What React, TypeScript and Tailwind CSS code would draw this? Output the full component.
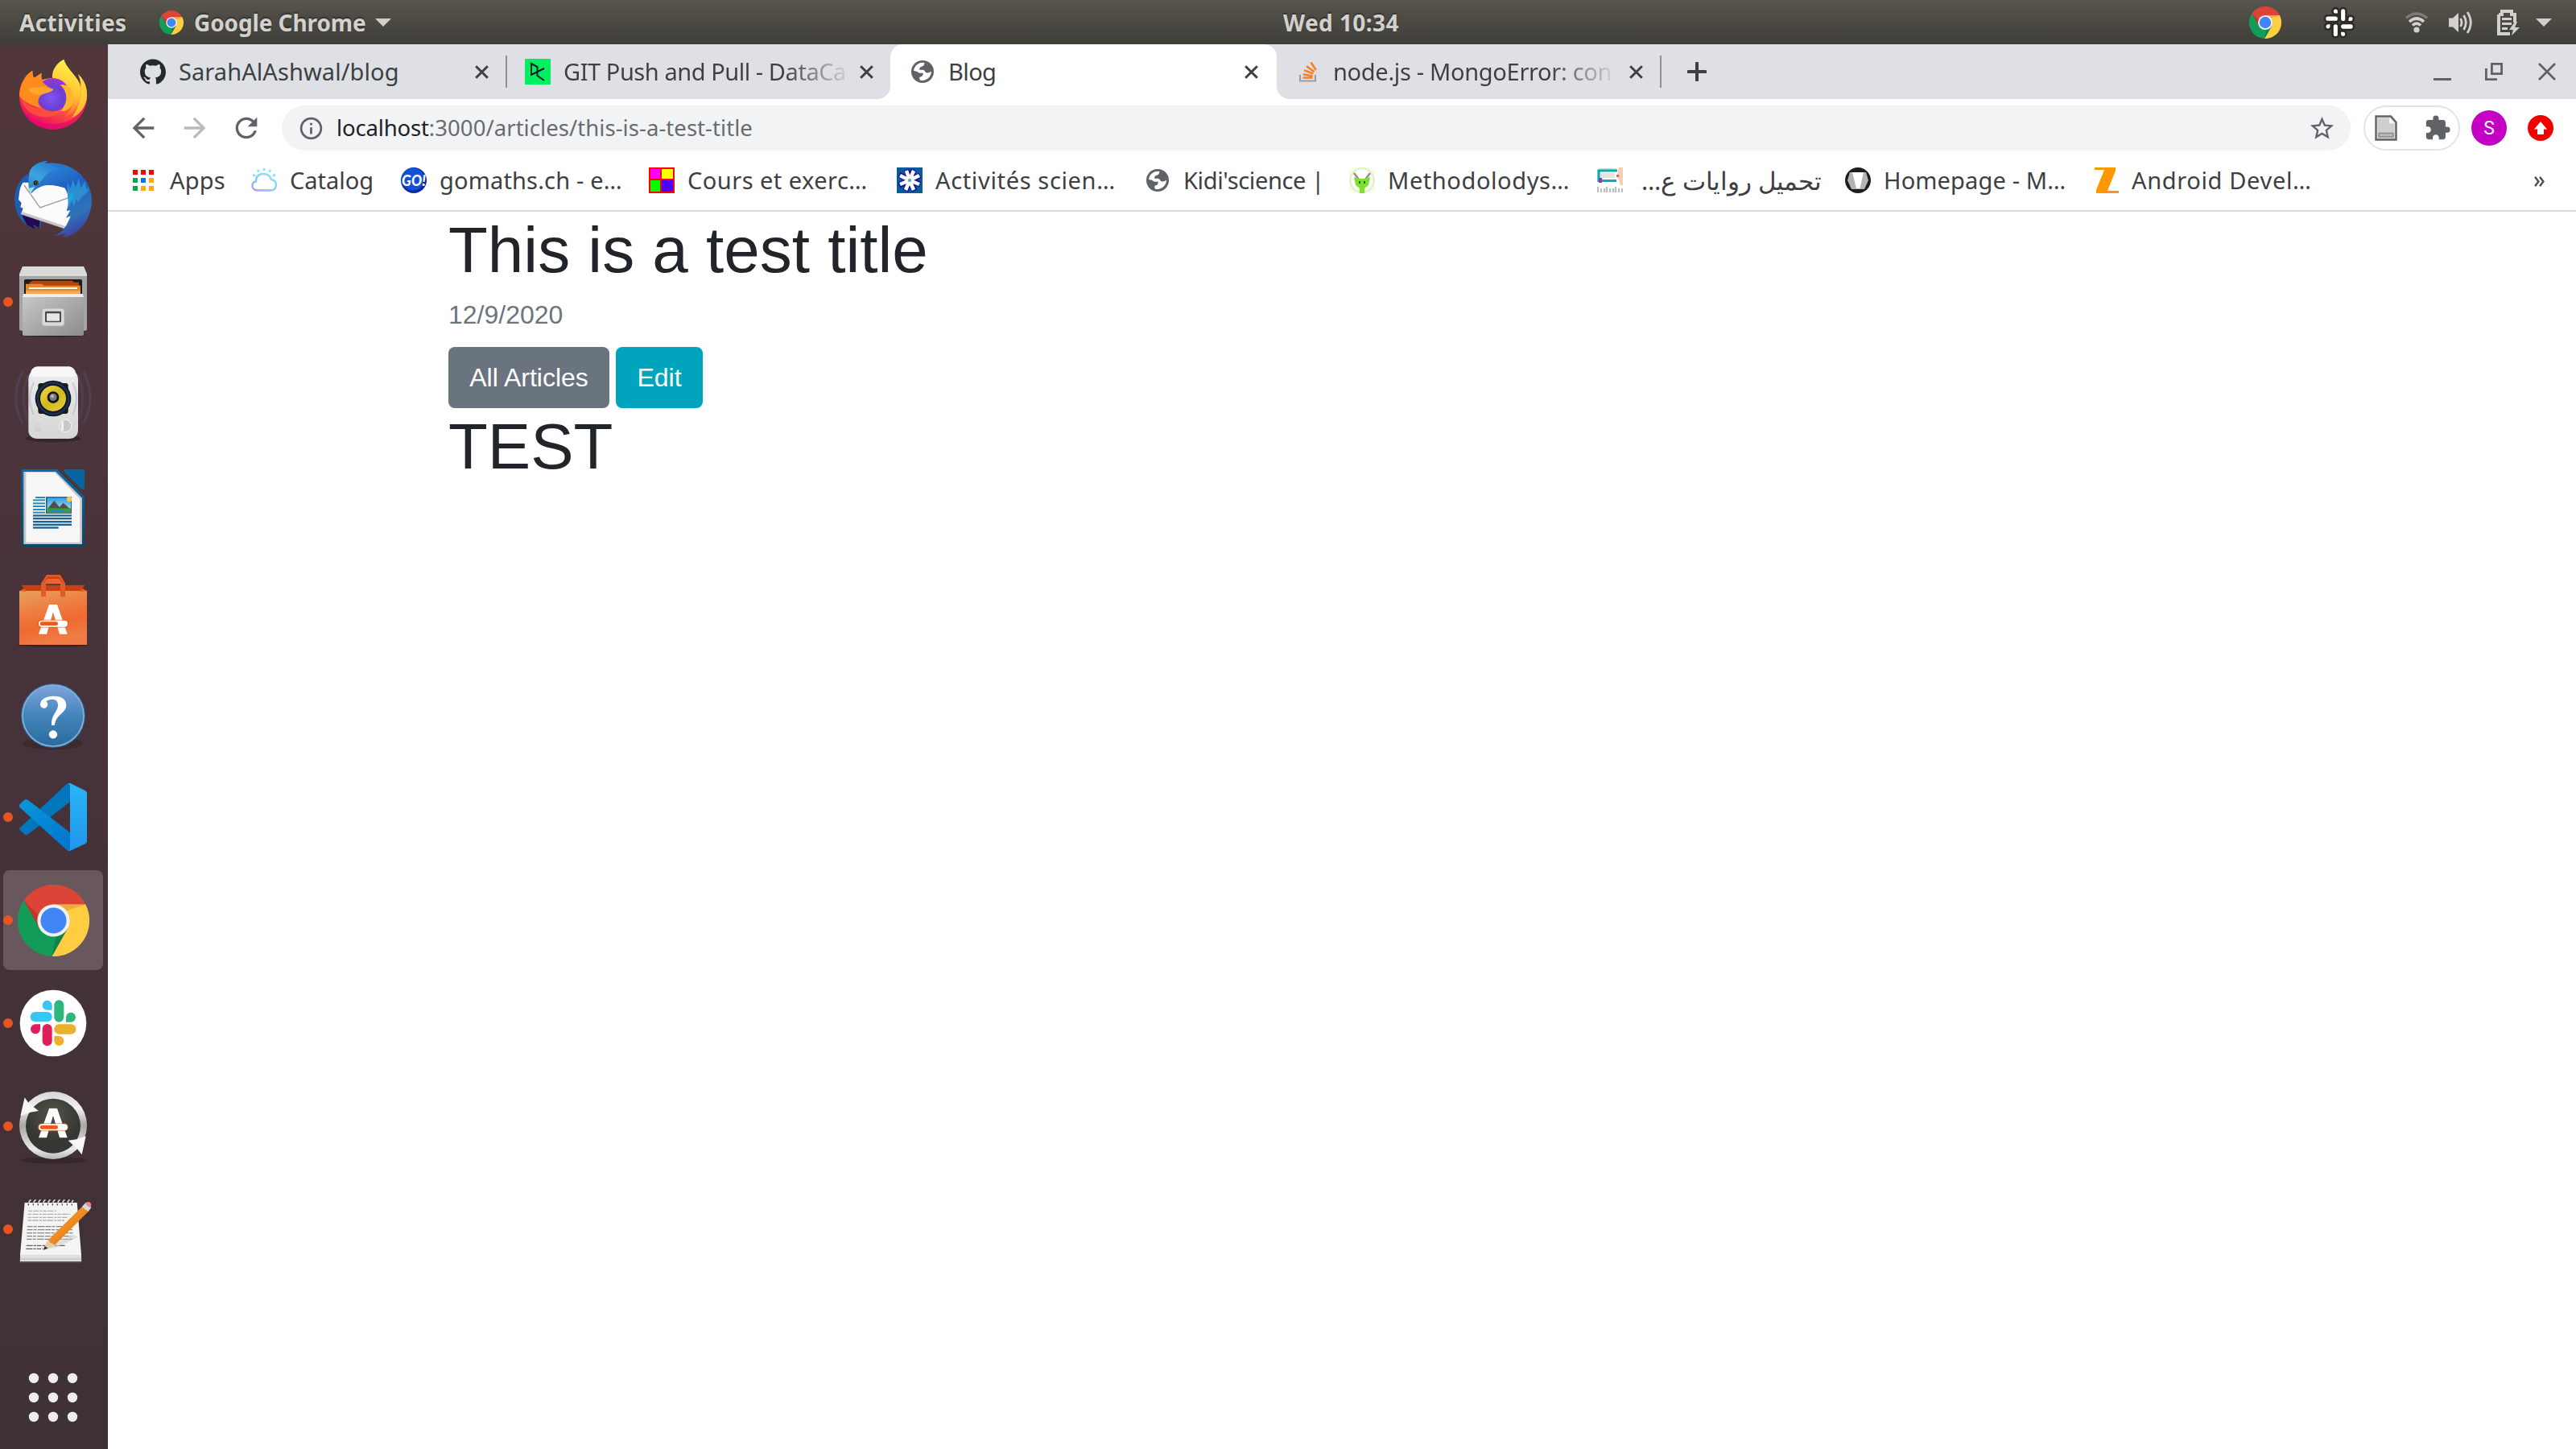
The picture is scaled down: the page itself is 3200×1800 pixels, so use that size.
import type { ReactNode } from 'react';
import { SiGithub } from 'react-icons/si';
import {
  MdArrowBack,
  MdArrowForward,
  MdExtension,
  MdInfoOutline,
  MdRefresh,
  MdStarBorder,
} from 'react-icons/md';

/* ---------- shared drawings ---------- */

function ChromeMark({ className }: { className: string }) {
  return (
    <svg viewBox="-133 -133 266 266" className={className}>
      <path d="M-110-75A133 133 0 0 1 119-60L0-60L0 0L-52 30Z" fill="#dc4437" />
      <path d="M-110-75L-52 30L0 0L52 30L-6 133A133 133 0 0 1-110-75Z" fill="#119d58" />
      <path d="M119-60A133 133 0 0 1-6 133L52 30L0 0L0-60Z" fill="#ffcd41" />
      <path d="M119-60L0-60L48-36Z" fill="#e2a637" opacity="0.75" />
      <path d="M-6 133L52 30L10 58Z" fill="#0b7c45" opacity="0.75" />
      <path d="M-110-75L-52 30L-56-20Z" fill="#b03429" opacity="0.75" />
      <circle r="60" fill="#f1f1f1" />
      <circle r="48" fill="#4285f4" />
    </svg>
  );
}

function Globe({ className }: { className: string }) {
  return (
    <svg viewBox="36 31 84 84" className={className}>
      <circle cx="78" cy="73" r="42" fill="#5f6368" />
      <path
        d="M45 70A34 34 0 0 1 85 40Q85 52 75 54Q66 56 66 66H78Q87 67 88 74Q94 82 111 72A34 34 0 0 1 69 105L66 98Q66 94 72 92Q80 90 80 83V78H66Q58 70 45 70Z"
        fill="#fff"
      />
    </svg>
  );
}

function SlackPieces() {
  return (
    <>
      <g fill="#38c6f3">
        <rect x="113" y="171" width="81" height="37" rx="18" />
        <path d="M194 164V146A18 18 0 1 0 176 164Z" />
      </g>
      <g fill="#2fb67d">
        <rect x="202" y="127" width="36" height="82" rx="18" />
        <path d="M246 209V190A18 18 0 1 1 264 209Z" />
      </g>
      <g fill="#ebb12e">
        <rect x="202" y="217" width="81" height="37" rx="18" />
        <path d="M202 261H220A18 18 0 1 1 202 279Z" />
      </g>
      <g fill="#e01f5a">
        <rect x="158" y="216" width="36" height="82" rx="18" />
        <path d="M150 217V236A18 18 0 1 1 132 217Z" />
      </g>
    </>
  );
}

function AppLetter({ y }: { y: number }) {
  return (
    <g transform={`translate(0 ${y})`}>
      <path d="M183 0H213L251 110H222L198 28L174 110H144Z" fill="#fff" />
      <rect x="140" y="56" width="115" height="30" rx="15" fill="#d9541f" opacity="0.6" />
      <rect x="144" y="59" width="108" height="24" rx="12" fill="#fff" />
      <rect x="149" y="64" width="67" height="14" rx="7" fill="#ee5a17" />
    </g>
  );
}

/* ---------- dock ---------- */

function Cell({
  box,
  running,
  children,
}: {
  box: string;
  running?: boolean;
  children: ReactNode;
}) {
  return (
    <div className="relative h-[128px] w-[134px] shrink-0">
      {running && <div className="absolute top-[58px] left-1 h-[12px] w-[11.5px] rounded-full bg-[#e95420]" />}
      <svg viewBox={box} className="relative block h-[128px] w-[134px]">
        {children}
      </svg>
    </div>
  );
}

function Dock() {
  return (
    <aside className="flex w-[134px] shrink-0 flex-col bg-linear-to-b from-[#51373a] via-[#46323a] to-[#3e3134]">
      <Cell box="0 15 402 384">
        <defs>
          <linearGradient id="ffBody" x1="0.8" y1="0" x2="0.25" y2="1">
            <stop offset="0" stopColor="#fff44f" />
            <stop offset="0.35" stopColor="#ffa02c" />
            <stop offset="0.65" stopColor="#ff4a3e" />
            <stop offset="1" stopColor="#e5006e" />
          </linearGradient>
          <linearGradient id="ffFlame" x1="0.6" y1="0" x2="0.4" y2="1">
            <stop offset="0" stopColor="#fff14d" />
            <stop offset="0.55" stopColor="#ffc631" />
            <stop offset="1" stopColor="#ff5a38" />
          </linearGradient>
          <radialGradient id="ffGlobe" cx="0.45" cy="0.6" r="0.65">
            <stop offset="0" stopColor="#8055f5" />
            <stop offset="0.55" stopColor="#6b3fd0" />
            <stop offset="1" stopColor="#a833d8" />
          </radialGradient>
        </defs>
        <path
          d="M121 113C121 126 122 135 128 140C137 133 146 126 156 122C153 133 154 141 158 147C172 143 186 141 197 142C194 110 212 84 238 72C243 92 262 112 284 140C297 156 301 168 302 176C303 158 298 142 291 127C314 146 325 176 324 208C323 280 268 332 198 332C128 332 72 276 72 206C72 166 92 130 121 113Z"
          fill="url(#ffBody)"
        />
        <path d="M74 226C84 276 130 312 196 312C262 312 314 272 323 218C320 282 264 332 198 332C134 332 80 288 74 226Z" fill="#e3086f" opacity="0.75" />
        <path d="M238 72C243 92 262 112 284 140C308 176 304 232 270 268C262 276 252 282 240 286C278 252 282 202 252 172C232 154 200 166 195 142C192 112 212 84 238 72Z" fill="url(#ffFlame)" />
        <path d="M291 127C316 150 330 186 322 222C314 258 290 280 268 288C300 246 312 176 291 127Z" fill="#ffd83a" opacity="0.75" />
        <circle cx="197" cy="203" r="62" fill="url(#ffGlobe)" />
        <path d="M224 166C262 162 282 196 272 230C266 254 246 266 224 264C252 240 258 196 224 166Z" fill="#ffb62e" />
        <path d="M72 206C74 166 92 130 121 113C121 126 122 135 128 140C152 142 168 172 198 182C198 192 170 194 154 204C138 218 138 240 156 254C110 240 84 226 72 206Z" fill="#ff8a1e" />
        <path d="M106 182C118 174 146 180 158 172C172 178 186 180 198 182C198 192 174 194 158 201C138 206 112 200 106 182Z" fill="#ffa62b" />
        <path d="M80 216C100 244 128 256 156 254C180 270 214 268 236 252C220 286 160 296 124 276C100 264 86 244 80 216Z" fill="#ff5b33" opacity="0.7" />
      </Cell>

      <Cell box="0 399 402 384">
        <defs>
          <linearGradient id="tbBody" x1="0.3" y1="0" x2="0.7" y2="1">
            <stop offset="0" stopColor="#2f8ede" />
            <stop offset="0.4" stopColor="#1f5fbf" />
            <stop offset="0.75" stopColor="#2f73b8" />
            <stop offset="1" stopColor="#3f3ea5" />
          </linearGradient>
          <linearGradient id="tbHead" x1="0.8" y1="0" x2="0.2" y2="1">
            <stop offset="0" stopColor="#1f6cc9" />
            <stop offset="0.6" stopColor="#3ea4e0" />
            <stop offset="1" stopColor="#2a80cf" />
          </linearGradient>
        </defs>
        <path d="M104 497C70 520 52 560 54 600C57 656 90 690 130 706L120 690L150 700L160 620L110 520Z" fill="#1f5cae" />
        <path d="M78 645L100 688L130 705L124 688L146 698L150 660Z" fill="#25084f" />
        <path d="M86 530C70 550 72 580 69 594L80 606L76 622L86 626L78 648L240 702C252 690 262 668 264 650L270 560L220 540L150 530Z" fill="#fbfbfb" />
        <path d="M78 650L240 702L246 694L84 640Z" fill="#a9a5a5" opacity="0.6" />
        <path d="M90 540L149 624L256 587" fill="none" stroke="#9b9b9b" strokeWidth="4" />
        <path d="M170 540C200 530 220 510 246 516L252 552C226 546 200 536 170 540Z" fill="#2b1673" />
        <path
          d="M108 500C110 472 140 452 178 449L164 462C250 444 330 500 341 580C348 660 300 726 232 734L246 720L202 730C226 716 240 706 252 680L264 655L246 662L262 634L248 636L256 606C256 576 246 556 240 550C206 538 176 536 152 546C136 552 124 562 118 570L108 562Z"
          fill="url(#tbBody)"
        />
        <path d="M108 500C112 472 140 452 178 449L164 460C200 452 232 462 252 474C216 478 178 486 162 512C152 530 136 540 122 560L112 572C104 548 106 522 108 500Z" fill="url(#tbHead)" />
        <path d="M250 530L262 552L272 520L282 550L294 512L302 552L316 524L322 556L330 548C330 582 300 570 294 606L284 592L276 622L268 600L254 630Z" fill="#2f9bd6" opacity="0.75" />
        <path d="M252 560L264 574L276 560L272 590L256 606Z" fill="#12b5e0" opacity="0.6" />
        <path d="M106 552L130 546L112 574Z" fill="#a9dbe0" />
        <circle cx="134" cy="532" r="9" fill="#151515" />
        <circle cx="136" cy="532" r="5" fill="none" stroke="#c98a1c" strokeWidth="2" />
      </Cell>

      <Cell box="0 783 402 384" running>
        <defs>
          <linearGradient id="metal" x1="0" y1="0" x2="1" y2="1">
            <stop offset="0" stopColor="#c9c9c9" />
            <stop offset="1" stopColor="#8c8c8c" />
          </linearGradient>
        </defs>
        <ellipse cx="198" cy="1098" rx="122" ry="8" fill="#2a1c1f" opacity="0.7" />
        <path d="M84 843H312L324 872V1076Q324 1082 318 1082H78Q72 1082 72 1076V872Z" fill="#a5a5a5" />
        <path d="M84 843H312L324 872H72Z" fill="#dadada" />
        <path d="M72 872H324V878H72Z" fill="#e4e4e4" />
        <rect x="90" y="891" width="216" height="60" rx="5" fill="#1d1d1d" />
        <path d="M110 903L120 896H270L276 902H294V950H110Z" fill="#b8430f" />
        <path d="M96 908H156L164 914H300V950H96Z" fill="#e9862c" />
        <path d="M108 921H288V927H108Z" fill="#fff" />
        <path d="M96 934H300V950H96Z" fill="#f0a859" />
        <path d="M90 945H306L312 955V1096Q312 1101 307 1101H89Q84 1101 84 1096V955Z" fill="url(#metal)" />
        <path d="M88 945H308L312 957H84Z" fill="#ededed" />
        <rect x="156" y="999" width="84" height="66" rx="10" fill="#dadada" stroke="#b0b0b0" strokeWidth="3" />
        <rect x="168" y="1010" width="60" height="41" rx="4" fill="#484c4b" />
        <rect x="174" y="1018" width="48" height="28" rx="2" fill="#e6e6e6" />
      </Cell>

      <Cell box="0 27 402 384">
        <defs>
          <linearGradient id="spk" x1="0" y1="0" x2="0" y2="1">
            <stop offset="0" stopColor="#fafafa" />
            <stop offset="0.15" stopColor="#e9e9e9" />
            <stop offset="1" stopColor="#d6d6d4" />
          </linearGradient>
          <linearGradient id="cone" x1="0" y1="0" x2="1" y2="1">
            <stop offset="0" stopColor="#f0da45" />
            <stop offset="0.5" stopColor="#d0b820" />
            <stop offset="1" stopColor="#e8d23c" />
          </linearGradient>
        </defs>
        <ellipse cx="198" cy="344" rx="104" ry="14" fill="#2a1c1f" opacity="0.6" />
        <g fill="none" stroke="#50507e" opacity="0.4">
          <path d="M84 94Q34 194 84 290" strokeWidth="9" />
          <path d="M311 94Q361 194 311 290" strokeWidth="9" />
          <path d="M104 110Q72 194 104 275" strokeWidth="8" />
          <path d="M292 110Q324 194 292 275" strokeWidth="8" />
        </g>
        <path d="M138 76H258Q276 78 282 98Q292 110 291 130V312Q290 344 256 345H140Q106 344 106 312V130Q105 110 114 98Q120 78 138 76Z" fill="url(#spk)" />
        <path d="M140 78H256Q272 80 280 104Q282 114 266 114H130Q114 114 118 102Q124 80 140 78Z" fill="#f7f7f7" />
        <rect x="142" y="138" width="112" height="114" rx="10" fill="#1c1c1c" />
        <circle cx="198" cy="195" r="67" fill="#131820" />
        <circle cx="198" cy="195" r="58" fill="none" stroke="#1f3152" strokeWidth="8" />
        <circle cx="198" cy="195" r="48" fill="url(#cone)" />
        <circle cx="198" cy="191" r="22" fill="#141414" />
        <circle cx="198" cy="190" r="14" fill="#7b7b7b" />
        <circle cx="195" cy="187" r="6" fill="#b9b9b9" />
        <path d="M126 136Q96 194 126 256M270 136Q300 194 270 256" fill="none" stroke="#8fa2d2" strokeWidth="6" opacity="0.4" />
        <circle cx="243" cy="297" r="23" fill="#c9c9c7" stroke="#f4f4f4" strokeWidth="3" />
        <path d="M232 280V314" stroke="#f0f0f0" strokeWidth="10" />
        <rect x="131" y="290" width="20" height="28" rx="3" fill="none" stroke="#cfcfcd" strokeWidth="3" />
        <circle cx="141" cy="309" r="5" fill="none" stroke="#c4c4c2" strokeWidth="3" />
      </Cell>

      <Cell box="0 411 402 384">
        <defs>
          <linearGradient id="wr" x1="0" y1="0" x2="0" y2="1">
            <stop offset="0" stopColor="#0b6aa8" />
            <stop offset="1" stopColor="#0a4668" />
          </linearGradient>
          <linearGradient id="wrSky" x1="0" y1="0" x2="0" y2="1">
            <stop offset="0" stopColor="#3aa0e0" />
            <stop offset="1" stopColor="#b5e2f6" />
          </linearGradient>
        </defs>
        <path d="M87 459H212L315 562V740Q315 747 308 747H87Q80 747 80 740V466Q80 459 87 459Z" fill="url(#wr)" />
        <path d="M244 459H308Q315 459 315 466V528Q314 537 304 533L240 470Q236 460 244 459Z" fill="#07659f" />
        <path d="M88 468H208L306 566V738H88Z" fill="#c6c6c6" />
        <path d="M90 470H204L298 570V731H97V470Z" fill="#f6f6f6" />
        <g fill="#2b8bb8">
          <rect x="132" y="561" width="36" height="6" />
          <rect x="123" y="571" width="45" height="6" />
          <rect x="123" y="583" width="45" height="6" />
          <rect x="123" y="594" width="45" height="6" />
          <rect x="123" y="606" width="45" height="6" />
          <rect x="123" y="617" width="45" height="6" />
        </g>
        <g fill="#1f6391">
          <rect x="123" y="628" width="144" height="7" />
          <rect x="123" y="639" width="144" height="7" />
          <rect x="123" y="651" width="144" height="7" />
          <rect x="123" y="662" width="144" height="7" />
          <rect x="123" y="673" width="95" height="7" />
        </g>
        <rect x="171" y="561" width="96" height="63" fill="#14679b" />
        <rect x="176" y="565" width="88" height="54" fill="url(#wrSky)" />
        <circle cx="258" cy="570" r="10" fill="#f5c944" />
        <path d="M177 606L202 576L222 600L236 584L260 606Z" fill="#4f4f4f" />
        <path d="M176 604H264V619H176Z" fill="#3f9b35" />
        <path d="M186 611H240V617H186Z" fill="#1a8fb0" />
      </Cell>

      <Cell box="0 795 402 384">
        <defs>
          <linearGradient id="bag" x1="0" y1="0" x2="0.3" y2="1">
            <stop offset="0" stopColor="#e8a05c" />
            <stop offset="0.45" stopColor="#ee7a3f" />
            <stop offset="0.7" stopColor="#ef6a2e" />
            <stop offset="1" stopColor="#f07c45" />
          </linearGradient>
        </defs>
        <ellipse cx="198" cy="1113" rx="132" ry="8" fill="#2a1c1f" opacity="0.7" />
        <path d="M80 891H316L308 900L324 914H72L88 902Z" fill="#c9410f" />
        <path d="M72 912H324V1113H72Z" fill="url(#bag)" />
        <path d="M72 912L94 904V916ZM324 912L302 904V916Z" fill="#e8602a" />
        <path d="M171 866H225L238 884H158Z" fill="#8e2c0b" />
        <path d="M153 934V884L174 852H224L243 884V934H225V886H171V934Z" fill="#e35a26" />
        <path d="M178 860H220L236 884H160Z" fill="#c44312" />
        <path d="M176 866H220L234 886H162Z" fill="#ea6532" />
        <AppLetter y={963} />
      </Cell>

      <Cell box="0 9 402 384">
        <defs>
          <linearGradient id="help" x1="0" y1="0" x2="0" y2="1">
            <stop offset="0" stopColor="#7fa3dd" />
            <stop offset="0.5" stopColor="#4385bb" />
            <stop offset="1" stopColor="#2a6a9e" />
          </linearGradient>
        </defs>
        <ellipse cx="198" cy="310" rx="112" ry="24" fill="#2a1c1f" opacity="0.35" />
        <circle cx="198" cy="207" r="120" fill="#2e6a9c" />
        <circle cx="198" cy="207" r="114" fill="url(#help)" stroke="#86b2da" strokeWidth="5" />
        <path
          d="M150 167C150 146 170 134 200 134C230 134 247 146 247 168C247 198 207 204 204 242L193 244C188 206 216 192 216 168C216 152 208 146 194 146C186 146 177 149 172 154A14 14 0 1 1 150 167Z"
          fill="#fff"
        />
        <circle cx="198" cy="277" r="15.500" fill="#fff" />
      </Cell>

      <Cell box="0 393 402 384" running>
        <defs>
          <linearGradient id="vsR" x1="0" y1="0" x2="0" y2="1">
            <stop offset="0" stopColor="#2bb4f6" />
            <stop offset="1" stopColor="#1f97ee" />
          </linearGradient>
          <linearGradient id="vsF" x1="0" y1="0" x2="1" y2="1">
            <stop offset="0" stopColor="#0a97dd" />
            <stop offset="1" stopColor="#0074cc" />
          </linearGradient>
        </defs>
        <path d="M73 626L248 462Q254 458 261 460V528L105 649Q97 654 90 648L75 634Q70 630 73 626Z" fill="#0276bb" />
        <path d="M75 536L90 522Q97 516 105 522L261 643V711Q254 713 248 707L73 548Q70 541 75 536Z" fill="url(#vsF)" />
        <path d="M254 459L262 459L317 486Q324 490 324 496V675Q324 681 317 685L262 710Q258 712 254 711Q261 708 261 700V470Q261 462 254 459Z" fill="url(#vsR)" />
      </Cell>

      <div className="relative flex h-[128px] w-[134px] shrink-0 items-center">
        <div className="absolute top-0.5 left-1 h-[124px] w-[124px] rounded-lg bg-[#68575c]" />
        <div className="absolute top-[58px] left-1 h-[12px] w-[11.5px] rounded-full bg-[#e95420]" />
        <ChromeMark className="relative ml-[21.5px] size-[89px]" />
      </div>

      <Cell box="0 21 402 384" running>
        <circle cx="198" cy="213" r="124" fill="#fff" />
        <SlackPieces />
      </Cell>

      <Cell box="0 405 402 384" running>
        <defs>
          <linearGradient id="ring" x1="0" y1="0" x2="0" y2="1">
            <stop offset="0" stopColor="#d6d6d6" />
            <stop offset="0.25" stopColor="#f2f2f2" />
            <stop offset="0.5" stopColor="#aaa6a4" />
            <stop offset="0.85" stopColor="#e9e9e9" />
            <stop offset="1" stopColor="#b5b5b5" />
          </linearGradient>
          <radialGradient id="disc" cy="0.3">
            <stop offset="0" stopColor="#55554f" />
            <stop offset="1" stopColor="#363632" />
          </radialGradient>
        </defs>
        <ellipse cx="198" cy="724" rx="122" ry="12" fill="#2a1c1f" opacity="0.5" />
        <circle cx="198" cy="594" r="126" fill="url(#ring)" />
        <circle cx="198" cy="596" r="102" fill="url(#disc)" />
        <path d="M183 530H213L251 640H222L198 558L174 640H144Z" fill="#fff" stroke="#33332f" strokeWidth="4" />
        <AppLetter y={530} />
        <path d="M92 490L106 510L144 540L110 546L76 559Z" fill="#f6f6f6" />
        <path d="M254 650L286 646L320 634L305 703L290 684Z" fill="#f6f6f6" />
      </Cell>

      <Cell box="0 789 402 384" running>
        <defs>
          <linearGradient id="pencil" x1="0" y1="0" x2="1" y2="1">
            <stop offset="0" stopColor="#fbb04a" />
            <stop offset="0.5" stopColor="#ef8b22" />
            <stop offset="1" stopColor="#c5660d" />
          </linearGradient>
        </defs>
        <path d="M73 1090H305V1106H73Z" fill="#4c5652" />
        <path d="M92 882H287L303 1076V1100H75V1076Z" fill="#f4f4f2" />
        <path d="M75 1076H303V1100H75Z" fill="#dededc" />
        <path d="M75 1090H303V1094H75Z" fill="#c6c6c4" />
        <g stroke="#b0b0ae" strokeWidth="4" strokeDasharray="14 3 22 4 9 3">
          <path d="M106 913H210M104 925H262M104 937H250M104 948H240" />
        </g>
        <g stroke="#868684" strokeWidth="4" strokeDasharray="20 3 12 4 26 3">
          <path d="M102 971H240M101 983H270M100 995H272M100 1007H262M99 1018H270" />
        </g>
        <g stroke="#5d5d5b" strokeWidth="4" strokeDasharray="24 3 10 3 16 4">
          <path d="M98 1042H242M97 1054H160" />
        </g>
        <g stroke="#2f3331" strokeWidth="4" fill="none">
          <path d="M106 892V884M124 892V884M142 892V884M160 892V884M178 892V884M196 892V884M214 892V884M232 892V884M250 892V884M268 892V884" />
        </g>
        <g stroke="#d8d8d6" strokeWidth="5" fill="none" strokeLinecap="round">
          <path d="M108 886Q108 874 114 872M126 886Q126 874 132 872M144 886Q144 874 150 872M162 886Q162 874 168 872M180 886Q180 874 186 872M198 886Q198 874 204 872M216 886Q216 874 222 872M234 886Q234 874 240 872M252 886Q252 874 258 872M268 886Q268 876 272 874" />
        </g>
        <path d="M170 1056L270 1000L290 1010L210 1050Z" fill="#c9c9c7" opacity="0.5" />
        <path d="M161 1058L176 1024L208 1042Z" fill="#e3cfa6" />
        <path d="M161 1058L167 1044L179 1052Z" fill="#333" />
        <path d="M178 1022L310 893L332 912L206 1038Q200 1042 196 1034Q186 1034 184 1027Z" fill="url(#pencil)" />
        <path d="M306 896L320 881L340 900L330 914Q318 910 306 896Z" fill="#d9d9d9" />
        <path d="M318 884Q326 876 336 881Q344 890 336 900Q324 896 318 884Z" fill="#e58a93" />
      </Cell>

      <div className="mt-auto flex h-[128px] w-[134px] shrink-0 items-center justify-center">
        <svg viewBox="0 0 134 128" className="h-[128px] w-[134px]" fill="#eeeeec">
          {[42, 66, 90].map((x) =>
            [40, 64, 88].map((y) => <circle key={`${x}-${y}`} cx={x} cy={y} r="6.2" />),
          )}
        </svg>
      </div>
    </aside>
  );
}

/* ---------- system bar ---------- */

function Caret() {
  return (
    <svg viewBox="0 0 20 10" className="h-[10px] w-[20px]">
      <path d="M0 0H20L10 10Z" fill="#cfcfcc" />
    </svg>
  );
}

function SystemBar() {
  return (
    <header className="relative flex h-[55px] shrink-0 items-center bg-linear-to-b from-[#59554d] to-[#3e3d38] pl-6 text-[28px] leading-[54px] font-bold text-[#d2d1cd] [text-shadow:0_-2px_2px_rgba(0,0,0,0.35)]">
      <span className="w-[174px] tracking-[0.35px]">Activities</span>
      <ChromeMark className="size-[30px]" />
      <span className="ml-[13px] w-[225px] tracking-[-0.1px]">Google Chrome</span>
      <Caret />
      <span className="ml-[1108px] w-[144px] tracking-[0.43px] whitespace-nowrap">Wed 10:34</span>
      <div className="ml-auto flex items-center pr-[30px]">
        <ChromeMark className="size-[40px]" />
        <svg viewBox="104 118 188 188" className="ml-[52px] size-[40px]">
          <g fill="#fff" stroke="#2c2b28" strokeWidth="12">
            <rect x="113" y="171" width="81" height="37" rx="18" />
            <path d="M194 164V146A18 18 0 1 0 176 164Z" />
            <rect x="202" y="127" width="36" height="82" rx="18" />
            <path d="M246 209V190A18 18 0 1 1 264 209Z" />
            <rect x="202" y="217" width="81" height="37" rx="18" />
            <path d="M202 261H220A18 18 0 1 1 202 279Z" />
            <rect x="158" y="216" width="36" height="82" rx="18" />
            <path d="M150 217V236A18 18 0 1 1 132 217Z" />
          </g>
        </svg>
        <svg viewBox="0 0 28 26" className="ml-[62px] h-[26px] w-[28px]" fill="none" stroke="#d2d1cd" strokeWidth="3.600">
          <path d="M1 7.500Q14-3.500 27 7.500" opacity="0.35" />
          <path d="M5 12Q14 4 23 12" />
          <path d="M9 16.500Q14 11.500 19 16.500" />
          <circle cx="14" cy="22" r="3.600" fill="#d2d1cd" stroke="none" />
        </svg>
        <svg viewBox="0 0 30 28" className="ml-[26px] h-[28px] w-[30px]" fill="none" stroke="#d2d1cd" strokeWidth="2.800">
          <path d="M0 8.500H5L12 2V26L5 19.500H0Z" fill="#d2d1cd" stroke="none" />
          <path d="M14.500 9Q17.500 14 14.500 19" />
          <path d="M18.500 5Q24 14 18.500 23" />
          <path d="M23 1Q31.500 14 23 27" />
        </svg>
        <svg viewBox="0 0 28 32" className="ml-[30px] h-[32px] w-[28px]">
          <path d="M2 6H6V2H18V6H22V16M16 30H2V6" fill="none" stroke="#d2d1cd" strokeWidth="4" />
          <path d="M6 10H18V13H6ZM6 16H18V19H6ZM6 22H13V25H6Z" fill="#d2d1cd" />
          <path d="M22 15L15 25H20L18 32L28 22H22L25 15Z" fill="#d2d1cd" />
        </svg>
        <span className="ml-5 flex">
          <Caret />
        </span>
      </div>
    </header>
  );
}

/* ---------- browser ---------- */

function Close() {
  return (
    <svg viewBox="0 0 17 17" className="size-[17px] shrink-0">
      <path d="M1.200 1.200L15.800 15.800M15.800 1.200L1.200 15.800" stroke="#3c4043" strokeWidth="3" />
    </svg>
  );
}

function Divider() {
  return <div className="h-[40px] w-[2px] shrink-0 bg-[#8f9196]" />;
}

const fade =
  'bg-linear-to-r from-[#3c4043] from-78% to-[#3c4043]/10 bg-clip-text text-transparent';

function TabStrip() {
  return (
    <div className="flex h-[68px] shrink-0 items-center bg-[#dfe0e5] text-[29px] leading-[66px] text-[#3c4043]">
      <div className="flex w-[494px] items-center pr-[21px] pl-[40px]">
        <SiGithub className="size-[32px] text-[#24292e]" />
        <span className="ml-4 flex-1 tracking-[0.08px] whitespace-nowrap">SarahAlAshwal/blog</span>
        <Close />
      </div>
      <Divider />
      <div className="flex w-[476px] items-center pr-[21px] pl-[22px]">
        <svg viewBox="0 0 32 32" className="size-[32px] shrink-0">
          <path d="M0 0H32V32H0Z" fill="#03ef62" />
          <path d="M24 12L8 20V6L15.500 10V21L24 27" fill="none" stroke="#05192d" strokeWidth="2" />
        </svg>
        <span className={`mr-auto ml-4 tracking-[-0.45px] whitespace-nowrap ${fade}`}>
          GIT Push and Pull - DataCa
        </span>
        <Close />
      </div>
      <div className="relative flex h-[68px] w-[480px] items-center rounded-t-[16px] bg-white pr-[23px] pl-[26px]">
        <div className="absolute bottom-0 -left-4 size-4 bg-white">
          <div className="size-4 rounded-br-[16px] bg-[#dfe0e5]" />
        </div>
        <div className="absolute -right-4 bottom-0 size-4 bg-white">
          <div className="size-4 rounded-bl-[16px] bg-[#dfe0e5]" />
        </div>
        <Globe className="size-[28px]" />
        <span className="ml-[18px] flex-1 tracking-[-0.6px]">Blog</span>
        <Close />
      </div>
      <div className="flex w-[476px] items-center pr-[21px] pl-[28px]">
        <svg viewBox="0 0 22 26" className="h-[26px] w-[22px] shrink-0" fill="none">
          <path d="M1 17V24.500H20V17" stroke="#9a9c9f" strokeWidth="2" />
          <path d="M4.500 20.500H16.500M4.800 16.200L16.600 18.400M6 11.200L17.400 15.600M9 6.200L18.600 13.200M14.500 1.500L20.800 11" stroke="#f48024" strokeWidth="2.500" />
        </svg>
        <span className={`mr-auto ml-5 tracking-[-0.32px] whitespace-nowrap ${fade}`}>
          node.js - MongoError: con
        </span>
        <Close />
      </div>
      <Divider />
      <svg viewBox="0 0 24 24" className="ml-8 size-[24px]">
        <path d="M12 1.500V22.500M1.500 12H22.500" stroke="#3c4043" strokeWidth="4" strokeLinecap="round" />
      </svg>
      <div className="ml-auto flex items-center pr-[25px]">
        <svg viewBox="0 0 22 22" className="size-[22px]">
          <path d="M0 19H22V22H0Z" fill="#5f6368" />
        </svg>
        <svg viewBox="0 0 22 22" className="ml-[42px] size-[22px]" fill="none" stroke="#5f6368" strokeWidth="2.800">
          <path d="M8.400 1.400H20.600V13.600H8.400Z" />
          <path d="M1.400 7V20.600H15" />
        </svg>
        <svg viewBox="0 0 22 22" className="ml-[44px] size-[22px]">
          <path d="M1 1L21 21M21 1L1 21" stroke="#5f6368" strokeWidth="2.800" />
        </svg>
      </div>
    </div>
  );
}

function Toolbar() {
  return (
    <div className="flex h-[72px] shrink-0 items-center pl-[24px] text-[#5f6368]">
      <MdArrowBack className="size-[40px]" />
      <MdArrowForward className="ml-[24px] size-[40px] text-[#b9babd]" />
      <MdRefresh className="ml-[24px] size-[40px]" />
      <div className="ml-[24px] flex h-[56px] w-[2570px] items-center rounded-full bg-[#f1f3f4] pr-[18px] pl-[20px]">
        <MdInfoOutline className="size-[33px]" />
        <span className="ml-[15px] flex-1 text-[27.5px] leading-[54px] tracking-[0.06px] whitespace-nowrap text-[#686b70]">
          <span className="tracking-[-0.15px] text-[#202124]">localhost</span>:3000/articles/this-is-a-test-title
        </span>
        <MdStarBorder className="size-[35px]" />
      </div>
      <div className="ml-[16px] flex h-[56px] w-[120px] items-center rounded-full border-2 border-[#e3e4e6] pr-[9px] pl-[12px]">
        <svg viewBox="0 0 28 32" className="h-[32px] w-[28px]">
          <path d="M1.500 1.500H20L26.500 9V30.500H1.500Z" fill="#dcdcdc" stroke="#626262" strokeWidth="2.400" />
          <path d="M4 4H18V11H24V28H4Z" fill="#cfcfcf" />
          <path d="M18 3V10H25Z" fill="#f6f6f6" />
          <path d="M5 22.500H23V27H5Z" fill="#b9b9b9" stroke="#8c8c8c" strokeWidth="1.500" />
        </svg>
        <MdExtension className="ml-auto size-[34px]" />
      </div>
      <div className="ml-[14px] flex size-[44px] items-center justify-center rounded-full bg-[#c300c3] font-['Roboto'] text-[23px] leading-none text-white">
        S
      </div>
      <svg viewBox="0 0 32 32" className="ml-[26px] size-[32px]">
        <circle cx="16" cy="16" r="16" fill="#f20000" />
        <path d="M16 8L24 17.500H20V24H12V17.500H8Z" fill="#fff" />
      </svg>
    </div>
  );
}

function Bookmark({
  icon,
  className,
  children,
}: {
  icon: ReactNode;
  className: string;
  children: ReactNode;
}) {
  return (
    <div className={`flex shrink-0 items-center whitespace-nowrap ${className}`}>
      {icon}
      <span>{children}</span>
    </div>
  );
}

const box = 'size-[32px] shrink-0';

function BookmarkBar() {
  const dots = ['#f00', '#f00', '#f00', '#0a5', '#07f', '#fa0', '#0a5', '#fa0', '#fa0'];
  return (
    <div className="flex h-[68px] shrink-0 items-start border-b-2 border-[#dadbe1] pl-[28px] text-[29px] leading-[58px] text-[#3c4043]">
      <Bookmark
        className="w-[150px] gap-[17px] tracking-[0.2px]"
        icon={
          <span className="grid size-[32px] shrink-0 grid-cols-[repeat(3,6px)] content-center justify-center gap-[4px]">
            {dots.map((c, i) => (
              <span key={i} className="size-[6px]" style={{ backgroundColor: c }} />
            ))}
          </span>
        }
      >
        Apps
      </Bookmark>
      <Bookmark
        className="w-[186px] gap-4"
        icon={
          <svg viewBox="0 0 32 32" className={box} fill="none">
            <defs>
              <linearGradient id="cloud" x1="1" y1="0" x2="0" y2="1">
                <stop offset="0" stopColor="#7ff0ea" />
                <stop offset="0.5" stopColor="#86cdf8" />
                <stop offset="1" stopColor="#b795f5" />
              </linearGradient>
            </defs>
            <path d="M8 28.500Q1 28 1.500 22Q2 18 6 17.500Q6 8 15 8Q23 8 25 15Q31 16 31 22Q30.500 28.500 24 28.500Z" stroke="url(#cloud)" strokeWidth="2.400" />
            <path d="M16 1V4M8 3L9.500 5.500M24 3L22.500 5.500M2 9L5 10.500M30 9L27 10.500" stroke="#7fe6f0" strokeWidth="2.600" />
          </svg>
        }
      >
        Catalog
      </Bookmark>
      <Bookmark
        className="w-[308px] gap-4 tracking-[0.16px]"
        icon={
          <svg viewBox="0 0 32 32" className={box}>
            <circle cx="16" cy="16" r="16" fill="#0a2d9e" />
            <circle cx="15" cy="14.500" r="14" fill="#1350d8" />
            <text x="16" y="22.500" textAnchor="middle" fontFamily="Lato" fontWeight="900" fontStyle="italic" fontSize="18" textLength="30" lengthAdjust="spacingAndGlyphs" fill="#fff">
              GO!
            </text>
          </svg>
        }
      >
        gomaths.ch - e…
      </Bookmark>
      <Bookmark
        className="w-[308px] gap-4 tracking-[0.47px]"
        icon={
          <svg viewBox="0 0 32 32" className={box}>
            <path d="M0 0H32V32H0Z" fill="#f00" />
            <path d="M2 2H14V14H2Z" fill="#f0f" />
            <path d="M16 2H30V14H16Z" fill="#ff0" />
            <path d="M2 16H14V30H2Z" fill="#0f0" />
            <path d="M16 16H30V30H16Z" fill="#4b00ff" />
          </svg>
        }
      >
        Cours et exerc…
      </Bookmark>
      <Bookmark
        className="w-[308px] gap-4 tracking-[0.65px]"
        icon={
          <svg viewBox="0 0 32 32" className={box}>
            <path d="M0 0H32V32H0Z" fill="#0a5a9c" />
            <path d="M16 16L12 3M16 16L21 3M16 16L29 10M16 16L29 21M16 16L22 29M16 16L11 29M16 16L3 22M16 16L3 9" stroke="#1208a0" strokeWidth="7" />
            <path d="M16 16L12 4M16 16L21 4M16 16L28 10M16 16L28 21M16 16L21 28M16 16L11 28M16 16L4 21M16 16L4 10" stroke="#fff" strokeWidth="4.600" />
            <circle cx="16" cy="16" r="2.200" fill="#6bb5b5" />
          </svg>
        }
      >
        Activités scien…
      </Bookmark>
      <Bookmark
        className="w-[254px] gap-[18px] pl-[2px] tracking-[-0.35px]"
        icon={<Globe className="size-[28px] shrink-0" />}
      >
        Kidi'science |
      </Bookmark>
      <Bookmark
        className="w-[308px] gap-4 tracking-[0.58px]"
        icon={
          <svg viewBox="0 0 32 32" className={box}>
            <path d="M0 0H32V32H0Z" fill="#f6fdf0" />
            <ellipse cx="16" cy="16" rx="14.500" ry="15" fill="#fff" stroke="#dcf3c6" strokeWidth="2.500" />
            <path d="M6 7L12 15M26 7L20 15" stroke="#9a8f80" strokeWidth="2.500" />
            <path d="M6 12L12 14H20L26 12L24 22L19 26V32H13V26L8 22Z" fill="#7be32f" />
            <path d="M12 17H14V20H12ZM18 17H20V20H18Z" fill="#2c6b13" />
          </svg>
        }
      >
        Methodolodys…
      </Bookmark>
      <Bookmark
        className="w-[308px] gap-[23px] text-[30.700px]"
        icon={
          <svg viewBox="0 0 32 32" className={box}>
            <path d="M2 1H24V5H2Z" fill="#bfe6e2" />
            <path d="M25 4H2V16.500H24" fill="none" stroke="#12aaa8" strokeWidth="3.200" />
            <path d="M4 7H22V13H4Z" fill="#e4e4e4" />
            <path d="M2 13H6V19H2Z" fill="#8a3fa8" />
            <path d="M27 0H32V22H29L25 10Z" fill="#f9cdb2" />
            <path d="M24 9H27V12H24Z" fill="#f05a6a" />
            <path d="M1 24V31M5 26V31M9 26V31M12 24V31M16 26V31M20 26V31M23 24V31M27 26V31M31 26V31" stroke="#bdbdbd" strokeWidth="2.200" />
          </svg>
        }
      >
        <span dir="rtl">تحميل روايات ع…</span>
      </Bookmark>
      <Bookmark
        className="w-[308px] gap-4 tracking-[0.15px]"
        icon={
          <svg viewBox="0 0 32 32" className={box}>
            <circle cx="16" cy="16" r="16" fill="#1d1d1d" />
            <path d="M6 6H26L29 16L24 27H8L3 16Z" fill="#b4b4b4" />
            <path d="M9 6H23L18.500 26H14Z" fill="#fff" />
          </svg>
        }
      >
        Homepage - M…
      </Bookmark>
      <Bookmark
        className="w-[280px] gap-4 tracking-[0.65px]"
        icon={
          <svg viewBox="0 0 32 32" className={box}>
            <path d="M2 0H28V4L18 29H32V32H4V28L14 3H2Z" fill="#ff9800" />
          </svg>
        }
      >
        Android Devel…
      </Bookmark>
      <span className="mr-[39px] ml-auto flex h-[60px] items-center">
        <svg viewBox="0 0 12 12" className="size-[13px]" fill="none" stroke="#4a4d52" strokeWidth="2.200">
          <path d="M1 .7L5 6L1 11.300M6.500 .7L10.500 6L6.500 11.300" />
        </svg>
      </span>
    </div>
  );
}

function Page() {
  return (
    <main className="flex-1 pl-[423px] font-['Liberation_Sans'] text-[32px] leading-[48px] text-[#212529]">
      <h1 className="mb-2 text-[80px] leading-[96px]">This is a test title</h1>
      <div className="mb-4 text-[#6c757d]">12/9/2020</div>
      <div className="flex gap-2 text-white">
        <button className="h-[76px] w-[200px] rounded-lg bg-[#6a747e]">All Articles</button>
        <button className="h-[76px] w-[108px] rounded-lg bg-[#00a5bd]">Edit</button>
      </div>
      <h1 className="text-[80px] leading-[96px]">TEST</h1>
    </main>
  );
}

export default function App() {
  return (
    <div className="flex h-[1800px] w-[3200px] flex-col overflow-hidden bg-white font-['Noto_Sans',sans-serif]">
      <SystemBar />
      <div className="flex flex-1">
        <Dock />
        <div className="flex flex-1 flex-col">
          <TabStrip />
          <Toolbar />
          <BookmarkBar />
          <Page />
        </div>
      </div>
    </div>
  );
}
